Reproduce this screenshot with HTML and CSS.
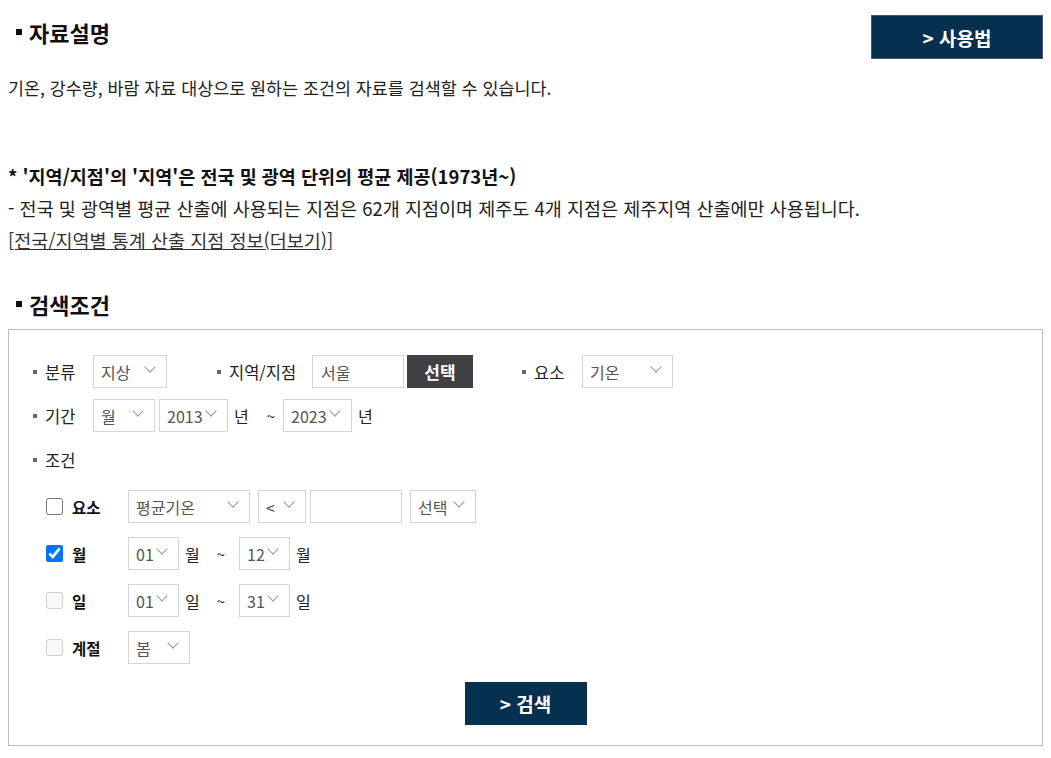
FILE: index.html
```html
<!DOCTYPE html>
<html lang="ko">
<head>
    <meta charset="UTF-8">
    <meta name="viewport" content="width=device-width, initial-scale=1.0">
    <title>자료설명 - 검색조건</title>
    <link rel="stylesheet" href="styles.css">
</head>
<body>
    <div class="page-head">
        <h2 class="tit">자료설명</h2>
        <button class="btn-guide" type="button">&gt; 사용법</button>
    </div>
    <p class="desc">기온, 강수량, 바람 자료 대상으로 원하는 조건의 자료를 검색할 수 있습니다.</p>

    <div class="notice">
        <p class="notice-tit">* '지역/지점'의 '지역'은 전국 및 광역 단위의 평균 제공(1973년~)</p>
        <p>- 전국 및 광역별 평균 산출에 사용되는 지점은 62개 지점이며 제주도 4개 지점은 제주지역 산출에만 사용됩니다.</p>
        <p><a href="#" class="link-more">[전국/지역별 통계 산출 지점 정보(더보기)]</a></p>
    </div>

    <h2 class="tit tit-search">검색조건</h2>
    <div class="search-box">
        <div class="row">
            <span class="lbl w60">분류</span>
            <div class="sel w74"><select><option>지상</option></select></div>

            <span class="lbl w95 ml50">지역/지점</span>
            <input class="txt w92" type="text" value="서울">
            <button class="btn-select" type="button">선택</button>

            <span class="lbl w60 ml49">요소</span>
            <div class="sel w91"><select><option>기온</option></select></div>
        </div>

        <div class="row">
            <span class="lbl w60">기간</span>
            <div class="sel w62"><select><option>월</option></select></div>
            <div class="sel w69 ml4"><select><option>2013</option></select></div>
            <span class="unit">년</span>
            <span class="tilde">~</span>
            <div class="sel w69"><select><option>2023</option></select></div>
            <span class="unit">년</span>
        </div>

        <div class="row row-cond-tit">
            <span class="lbl">조건</span>
        </div>

        <div class="cond">
            <div class="cond-row">
                <input class="chk" type="checkbox" id="c-elem">
                <label class="cond-lbl" for="c-elem">요소</label>
                <div class="sel w122"><select><option>평균기온</option></select></div>
                <div class="sel w48 ml8"><select><option>&lt;</option></select></div>
                <input class="txt w92 ml4" type="text">
                <div class="sel w66 ml8"><select><option>선택</option></select></div>
            </div>
            <div class="cond-row">
                <input class="chk" type="checkbox" id="c-month" checked>
                <label class="cond-lbl" for="c-month">월</label>
                <div class="sel w51"><select><option>01</option></select></div>
                <span class="unit">월</span>
                <span class="tilde tilde-wide">~</span>
                <div class="sel w51"><select><option>12</option></select></div>
                <span class="unit">월</span>
            </div>
            <div class="cond-row">
                <input class="chk" type="checkbox" id="c-day" disabled>
                <label class="cond-lbl" for="c-day">일</label>
                <div class="sel w51"><select><option>01</option></select></div>
                <span class="unit">일</span>
                <span class="tilde tilde-wide">~</span>
                <div class="sel w51"><select><option>31</option></select></div>
                <span class="unit">일</span>
            </div>
            <div class="cond-row">
                <input class="chk" type="checkbox" id="c-season" disabled>
                <label class="cond-lbl" for="c-season">계절</label>
                <div class="sel w62"><select><option>봄</option></select></div>
            </div>
        </div>

        <div class="btn-area">
            <button class="btn-search" type="button">&gt; 검색</button>
        </div>
    </div>
</body>
</html>
```

FILE: styles.css
```css
* {
    box-sizing: border-box;
}

body {
    margin: 8px;
    font-family: "Noto Sans CJK KR", "Noto Sans", sans-serif;
    font-size: 16px;
    color: #222;
    background-color: #fff;
}

p {
    margin: 0;
}

/* headings */
.page-head {
    display: flex;
    justify-content: space-between;
    align-items: flex-start;
    padding-top: 7px;
}

.tit {
    display: flex;
    align-items: center;
    gap: 7px;
    margin: 0;
    padding-left: 8px;
    font-size: 22px;
    font-weight: 700;
    line-height: 34px;
    color: #111;
}

.tit::before {
    content: '';
    width: 6px;
    height: 6px;
    background-color: #111;
}

.tit-search {
    margin-top: 31px;
}

.btn-guide {
    width: 172px;
    height: 44px;
    border: 1px solid #4b5a68;
    background-color: #05304f;
    color: #fff;
    font-family: inherit;
    font-size: 19px;
    font-weight: 700;
    cursor: pointer;
}

.desc {
    margin-top: 13px;
    font-size: 17.4px;
    line-height: 32px;
}

.notice {
    margin-top: 56px;
    font-size: 18.5px;
    line-height: 32px;
}

.notice-tit {
    font-weight: 700;
    color: #111;
}

.link-more {
    color: #333;
    text-decoration: underline;
}

/* search box */
.search-box {
    margin-top: 8px;
    padding: 25px 24px 20px;
    border: 1px solid #bdbdbd;
}

.row {
    display: flex;
    align-items: center;
    height: 33px;
    margin-bottom: 11px;
}

.row-cond-tit {
    margin-bottom: 14px;
}

.lbl {
    display: flex;
    align-items: center;
    gap: 8px;
    flex-shrink: 0;
    font-size: 16.5px;
    color: #222;
}

.lbl::before {
    content: '';
    width: 4px;
    height: 4px;
    background-color: #666;
}

.sel {
    position: relative;
    flex-shrink: 0;
    height: 33px;
}

.sel select {
    width: 100%;
    height: 100%;
    padding: 0 20px 0 7px;
    border: 1px solid #d5d5d5;
    border-radius: 0;
    background-color: #fff;
    font-family: inherit;
    font-size: 16px;
    color: #555;
    appearance: none;
    -webkit-appearance: none;
    outline: none;
}

.sel::after {
    content: '';
    position: absolute;
    top: 8px;
    right: 13px;
    width: 7px;
    height: 7px;
    border-right: 1px solid #999;
    border-bottom: 1px solid #999;
    transform: rotate(45deg);
    pointer-events: none;
}

.txt {
    flex-shrink: 0;
    height: 33px;
    padding: 0 8px;
    border: 1px solid #d5d5d5;
    border-radius: 0;
    font-family: inherit;
    font-size: 16px;
    color: #555;
    outline: none;
}

.btn-select {
    width: 66px;
    height: 33px;
    margin-left: 3px;
    border: none;
    background-color: #404045;
    color: #fff;
    font-family: inherit;
    font-size: 17px;
    font-weight: 700;
    cursor: pointer;
}

.unit {
    margin-left: 6px;
    font-size: 16px;
}

.tilde {
    margin: 0 8px 0 18px;
    font-size: 15px;
}

.tilde-wide {
    margin: 0 14px 0 17px;
}

/* condition rows */
.cond {
    padding-left: 13px;
}

.cond-row {
    display: flex;
    align-items: center;
    height: 33px;
    margin-bottom: 14px;
}

.cond-row:last-child {
    margin-bottom: 0;
}

.chk {
    width: 17px;
    height: 17px;
    margin: 0;
    flex-shrink: 0;
}

.cond-lbl {
    width: 56px;
    margin-left: 9px;
    flex-shrink: 0;
    font-size: 15.5px;
    font-weight: 700;
    color: #111;
}

.btn-area {
    display: flex;
    justify-content: center;
    margin-top: 18px;
}

.btn-search {
    width: 122px;
    height: 43px;
    border: none;
    background-color: #05304f;
    color: #fff;
    font-family: inherit;
    font-size: 19px;
    font-weight: 700;
    cursor: pointer;
}

/* widths / offsets */
.w48 { width: 48px; }
.w51 { width: 51px; }
.w60 { width: 60px; }
.w62 { width: 62px; }
.w66 { width: 66px; }
.w69 { width: 69px; }
.w74 { width: 74px; }
.w91 { width: 91px; }
.w92 { width: 92px; }
.w95 { width: 95px; }
.w122 { width: 122px; }

.ml4 { margin-left: 4px; }
.ml8 { margin-left: 8px; }
.ml49 { margin-left: 49px; }
.ml50 { margin-left: 50px; }
```
